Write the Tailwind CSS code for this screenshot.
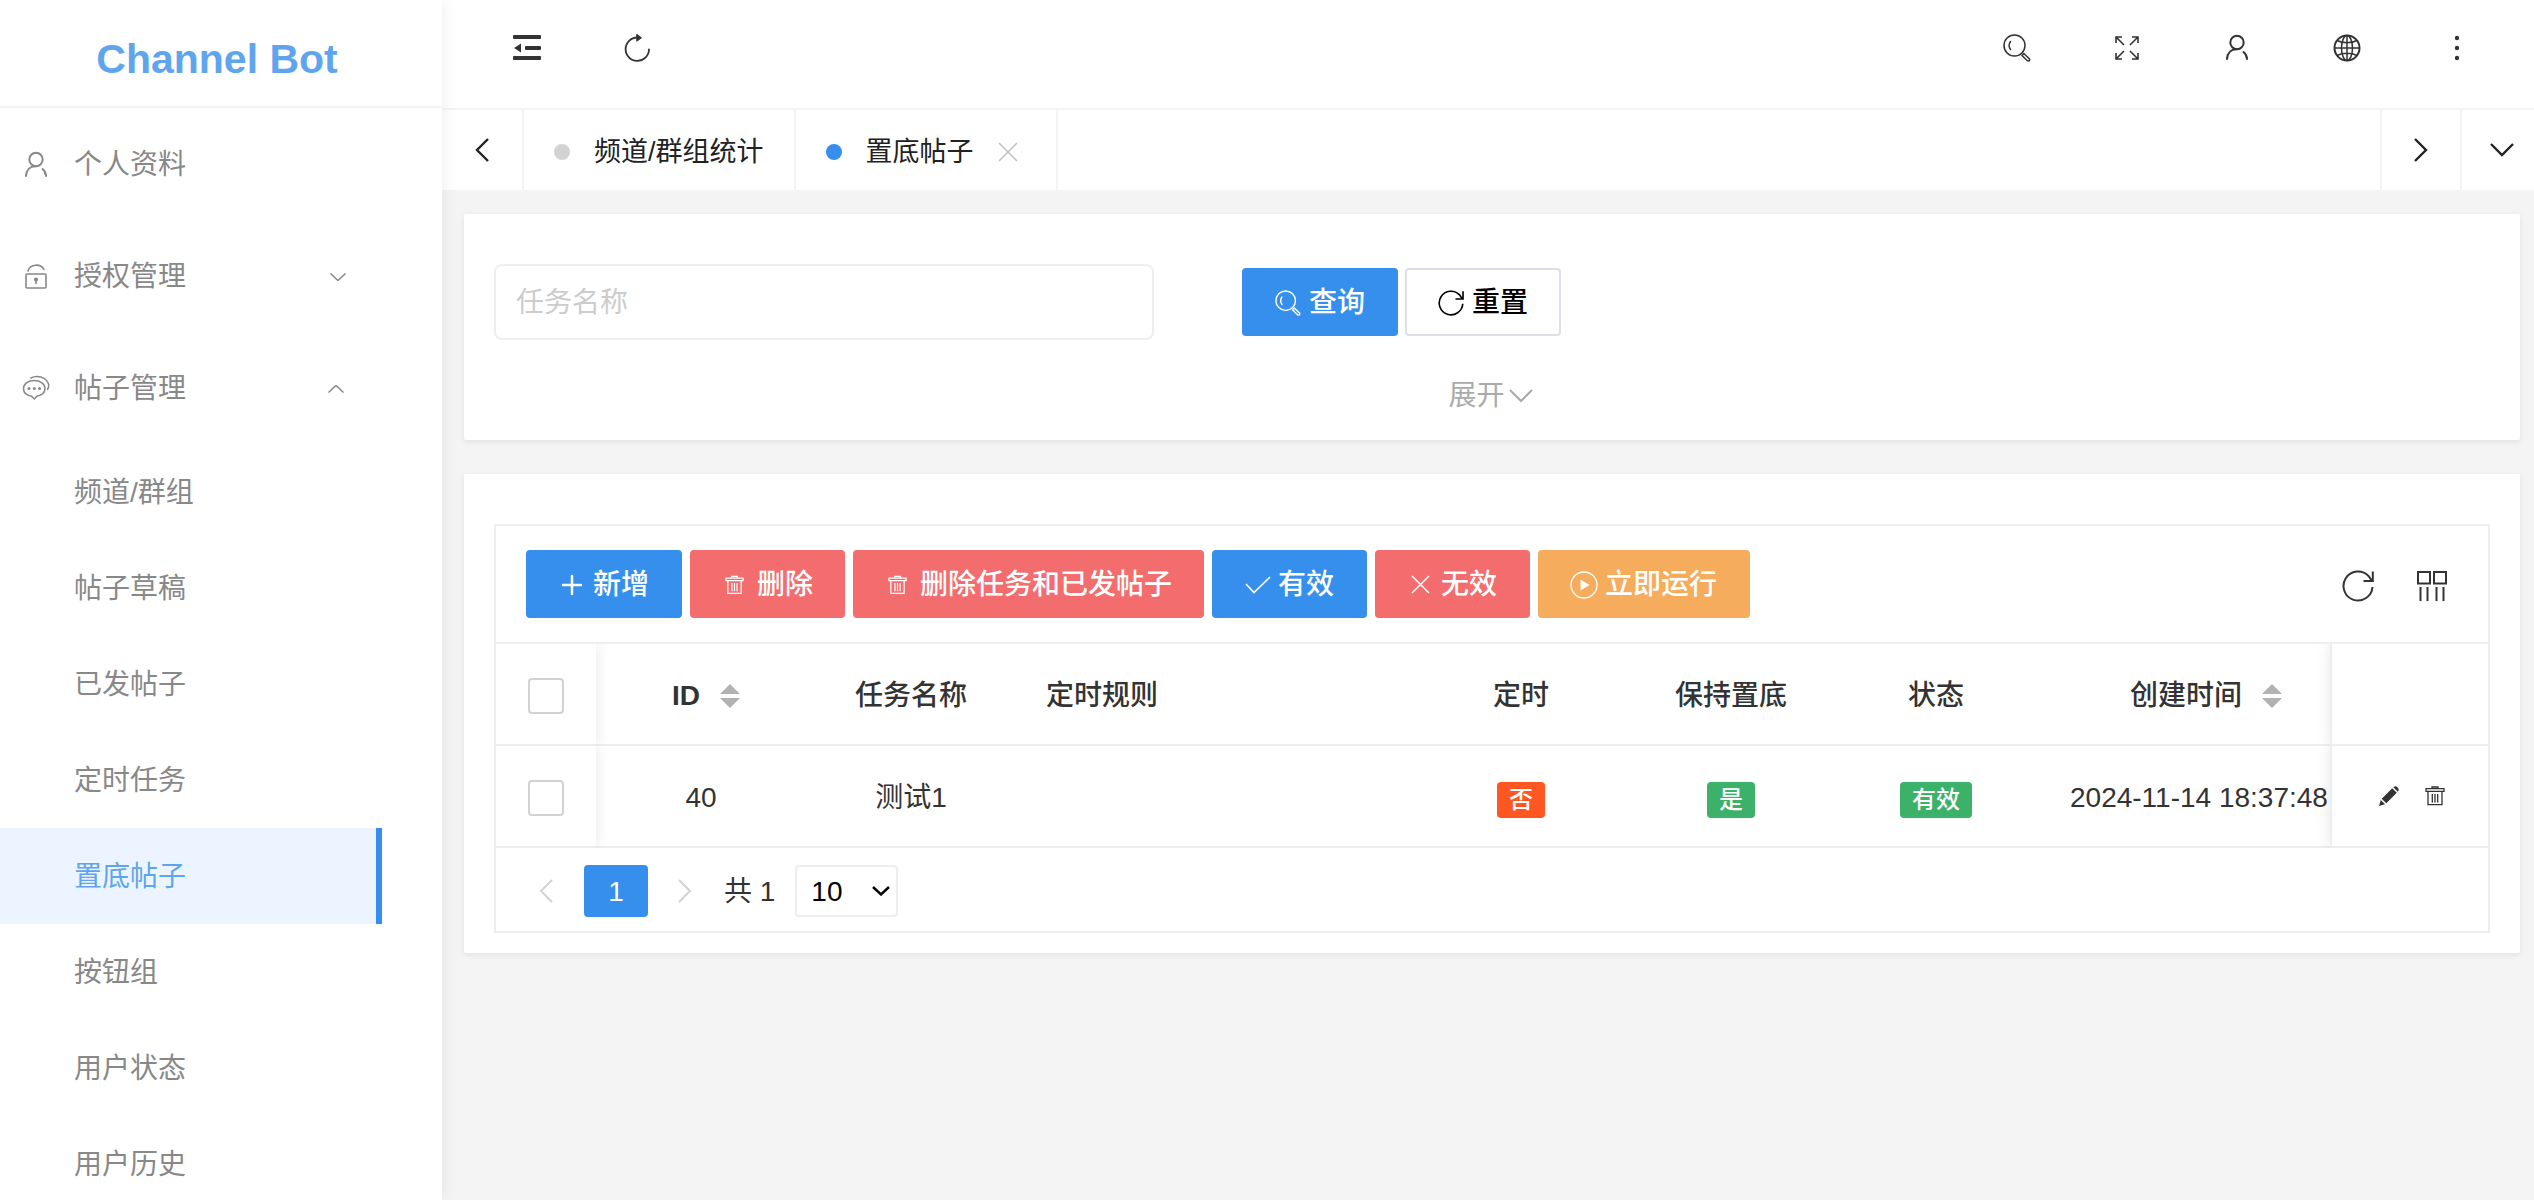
<!DOCTYPE html>
<html lang="zh-CN">
<head>
  <meta charset="UTF-8" />
  <meta name="viewport" content="width=device-width, initial-scale=1.0" />
  <title>Channel Bot</title>
  <script src="https://cdn.jsdelivr.net/npm/@tailwindcss/browser@4"></script>
</head>
<body class="flex h-screen overflow-hidden bg-[#f4f4f4] font-['Liberation_Sans','Noto_Sans_CJK_SC',sans-serif] text-[28px] leading-10 text-[#333]">

  <!-- shared icons -->
  <svg class="hidden">
    <symbol id="i-user" viewBox="0 0 28 28" fill="none" stroke="currentColor" stroke-width="2" stroke-linecap="round">
      <circle cx="14" cy="8.500" r="6.700" />
      <path d="M4 25C4.300 19 8 15.300 13.500 15.200M20.500 18C22.800 19.800 23.900 22.300 24 25" />
    </symbol>
    <symbol id="i-search" viewBox="0 0 28 28" fill="none" stroke="currentColor" stroke-width="1.500" stroke-linecap="round">
      <circle cx="11.500" cy="11.500" r="10.500" />
      <path d="M7.500 7.500C5.800 10 5.900 13.300 7.500 15.500M19 21.500L20.800 19.500L26.300 24.800C27.300 26.200 25.800 27.600 24.300 26.700Z" />
    </symbol>
    <symbol id="i-trash" viewBox="0 0 20 20" fill="none" stroke="currentColor" stroke-width="1.300">
      <path d="M7 2.500V1H13V2.500M1 2.700H19V5.300H1ZM3 5.500V18.700H17V5.500M7.300 8V16.500M10 8V16.500M12.700 8V16.500" />
    </symbol>
    <symbol id="i-reload" viewBox="0 0 32 32" fill="none" stroke="currentColor" stroke-width="2">
      <path d="M30.500 17A14.500 14.500 0 1 1 26.500 6L30 11M30.800 1.500V11H21.500" />
    </symbol>
    <symbol id="i-sort" viewBox="0 0 20 24" fill="#b2b2b2">
      <path d="M10 0L20 10H0ZM0 14H20L10 24Z" />
    </symbol>
  </svg>

  <!-- sidebar -->
  <aside class="relative z-10 w-[442px] shrink-0 overflow-hidden bg-white text-[#888] shadow-[0_0_16px_rgba(0,0,0,0.08)]">
    <h1 class="flex h-[108px] items-center justify-center border-b-2 border-[#f3f3f3] pt-3 pr-2 text-[41px] font-bold text-[#5fa5ee]">Channel Bot</h1>
    <nav>
      <a href="#" class="flex h-28 items-center gap-6 pt-0.5 pl-[22px]">
        <svg class="size-7"><use href="#i-user" /></svg>
        个人资料
      </a>
      <a href="#" class="flex h-28 items-center gap-6 pt-0.5 pl-[22px]">
        <svg class="size-7" viewBox="0 0 28 28" fill="none" stroke="currentColor" stroke-width="1.600" stroke-linecap="round">
          <rect x="4" y="11" width="20" height="14" rx="1" />
          <path d="M6 8C8 .5 19 .5 22 6.500M14 17V20.500" />
          <circle cx="14" cy="16.500" r="1.300" fill="currentColor" />
        </svg>
        授权管理
        <svg class="mr-[96px] ml-auto h-2 w-4" viewBox="0 0 16 8" fill="none" stroke="currentColor" stroke-width="1.500"><path d="M.5.5L8 7.500L15.500.5" /></svg>
      </a>
      <a href="#" class="flex h-28 items-center gap-6 pt-0.5 pl-[22px]">
        <svg class="size-7" viewBox="0 0 28 28" fill="none" stroke="currentColor" stroke-width="1.500" stroke-linecap="round">
          <path d="M12 5.500C18.500 5.500 23 9 23 13.500C23 17.500 19.500 20.300 15 21.200L12.300 24L9.500 21.200C4.500 20.300 1.500 17.500 1.500 13.500C1.500 9 6 5.500 12 5.500Z" />
          <path d="M9 3C12 1.100 18 1 22 3.300C26.500 6 28 10.500 25.500 14.500" />
          <g fill="currentColor" stroke="none"><circle cx="7" cy="13.500" r="1.500" /><circle cx="12.300" cy="13.500" r="1.500" /><circle cx="17.600" cy="13.500" r="1.500" /></g>
        </svg>
        帖子管理
        <svg class="mr-[98px] ml-auto h-2 w-4" viewBox="0 0 16 8" fill="none" stroke="currentColor" stroke-width="1.500"><path d="M.5 7.500L8 .5L15.500 7.500" /></svg>
      </a>
      <div class="w-[382px]">
        <a href="#" class="flex h-24 items-center pt-0.5 pl-[74px]">频道/群组</a>
        <a href="#" class="flex h-24 items-center pt-0.5 pl-[74px]">帖子草稿</a>
        <a href="#" class="flex h-24 items-center pt-0.5 pl-[74px]">已发帖子</a>
        <a href="#" class="flex h-24 items-center pt-0.5 pl-[74px]">定时任务</a>
        <a href="#" class="flex h-24 items-center border-r-6 border-[#368fec] bg-[#ecf5ff] pt-0.5 pl-[74px] text-[#5fa5ee]">置底帖子</a>
        <a href="#" class="flex h-24 items-center pt-0.5 pl-[74px]">按钮组</a>
        <a href="#" class="flex h-24 items-center pt-0.5 pl-[74px]">用户状态</a>
        <a href="#" class="flex h-24 items-center pt-0.5 pl-[74px]">用户历史</a>
      </div>
    </nav>
  </aside>

  <div class="min-w-0 flex-1">
    <!-- top bar -->
    <header class="flex h-[110px] border-b-2 border-[#f4f4f4] bg-white pr-[22px] pb-3 pl-[30px]">
      <button class="flex w-[110px] items-center justify-center" aria-label="收起菜单">
        <svg class="size-7" viewBox="0 0 28 28" fill="currentColor">
          <rect y="1" width="28" height="4" rx="1" /><rect x="12" y="12" width="16" height="4" rx="1" /><rect y="22" width="28" height="4" rx="1" />
          <path d="M8 9.500V18.500L1 14Z" />
        </svg>
      </button>
      <button class="flex w-[110px] items-center justify-center" aria-label="刷新">
        <svg class="size-7" viewBox="0 0 28 28" fill="none" stroke="currentColor" stroke-width="1.800" stroke-linecap="round">
          <path d="M26 15.500A11.700 11.700 0 1 1 14.300 3.500" />
          <path d="M14 .5L18.500 3.800L14 7Z" fill="currentColor" stroke-width="1" />
        </svg>
      </button>
      <button class="ml-auto flex w-[110px] items-center justify-center" aria-label="搜索">
        <svg class="size-7"><use href="#i-search" /></svg>
      </button>
      <button class="flex w-[110px] items-center justify-center" aria-label="全屏">
        <svg class="size-6" viewBox="0 0 24 24" fill="none" stroke="currentColor" stroke-width="1.600">
          <path d="M1 7V1H7M1 1L9 9M17 1H23V7M23 1L15 9M1 17V23H7M1 23L9 15M17 23H23V17M23 23L15 15" />
        </svg>
      </button>
      <button class="flex w-[110px] items-center justify-center" aria-label="用户">
        <svg class="size-7"><use href="#i-user" /></svg>
      </button>
      <button class="flex w-[110px] items-center justify-center" aria-label="语言">
        <svg class="size-7" viewBox="0 0 28 28" fill="none" stroke="currentColor" stroke-width="1.500">
          <circle cx="14" cy="14" r="12.500" stroke-width="2" />
          <ellipse cx="14" cy="14" rx="5.500" ry="12.500" />
          <path d="M14 1V27M1 14H27M4 6.500C9.500 9.500 18.500 9.500 24 6.500M4 21.500C9.500 18.500 18.500 18.500 24 21.500" />
        </svg>
      </button>
      <button class="flex w-[110px] items-center justify-center" aria-label="更多">
        <svg class="size-7" viewBox="0 0 28 28" fill="currentColor"><circle cx="14" cy="4" r="2.200" /><circle cx="14" cy="14" r="2.200" /><circle cx="14" cy="24" r="2.200" /></svg>
      </button>
    </header>

    <!-- page tabs -->
    <div class="flex h-20 bg-white text-[27px] text-[#222]">
      <button class="flex w-[82px] items-center justify-center border-r-2 border-[#f4f4f4]" aria-label="向左">
        <svg class="h-6 w-[14px]" viewBox="0 0 14 24" fill="none" stroke="currentColor" stroke-width="2.400"><path d="M13 1L2 12L13 23" /></svg>
      </button>
      <a href="#" class="flex items-center gap-6 border-r-2 border-[#f4f4f4] px-[30px] pt-[3px]">
        <span class="size-4 rounded-full bg-[#d2d2d2]"></span>频道/群组统计
      </a>
      <div class="flex items-center gap-6 border-r-2 border-[#f4f4f4] pt-[3px] pr-[38px] pl-[30px]">
        <span class="size-4 rounded-full bg-[#368fec]"></span>
        <a href="#">置底帖子</a>
        <button class="text-[#c2c2c2]" aria-label="关闭">
          <svg class="size-5" viewBox="0 0 20 20" fill="none" stroke="currentColor" stroke-width="1.600"><path d="M1 1L19 19M19 1L1 19" /></svg>
        </button>
      </div>
      <button class="ml-auto flex w-[82px] items-center justify-center border-x-2 border-[#f4f4f4]" aria-label="向右">
        <svg class="h-6 w-[14px]" viewBox="0 0 14 24" fill="none" stroke="currentColor" stroke-width="2.400"><path d="M1 1L12 12L1 23" /></svg>
      </button>
      <button class="flex w-[72px] items-center pl-7" aria-label="标签操作">
        <svg class="h-[14px] w-6" viewBox="0 0 24 14" fill="none" stroke="currentColor" stroke-width="2.400"><path d="M1 1L12 12L23 1" /></svg>
      </button>
    </div>

    <main class="flex flex-col gap-[34px] pt-6 pr-[14px] pl-[22px]">
      <!-- search form -->
      <section class="rounded-xs bg-white px-[30px] pt-[50px] pb-6 shadow-[0_2px_5px_1px_rgba(0,0,0,0.06)]">
        <form class="flex items-center">
          <input type="text" aria-label="任务名称" placeholder="任务名称" class="h-[76px] w-[660px] rounded-lg border-2 border-[#eee] px-5 pt-0.5 placeholder:text-[#ccc]" />
          <button type="button" class="ml-[88px] flex h-[68px] items-center gap-2 rounded bg-[#368fec] px-[33px] pt-0.5 font-medium text-white">
            <svg class="size-[26px]"><use href="#i-search" /></svg>查询
          </button>
          <button type="reset" class="ml-[7px] flex h-[68px] items-center gap-2 rounded border-2 border-[#dcdfe6] px-[31px] pt-0.5 font-medium text-black">
            <svg class="size-[26px]"><use href="#i-reload" /></svg>重置
          </button>
        </form>
        <div class="mt-9 flex justify-center pr-[3px]">
          <a href="#" class="flex items-center gap-1 text-[#aaa]">
            展开
            <svg class="h-[14px] w-6" viewBox="0 0 24 14" fill="none" stroke="currentColor" stroke-width="2"><path d="M1 1L12 12L23 1" /></svg>
          </a>
        </div>
      </section>

      <!-- task list -->
      <section class="rounded-xs bg-white px-[30px] pt-[50px] pb-5 shadow-[0_2px_5px_1px_rgba(0,0,0,0.06)]">
        <div class="border-2 border-[#eee]">
          <div class="flex items-center gap-2 border-b-2 border-[#eee] px-[30px] py-6 font-medium text-white">
            <button class="flex h-[68px] items-center gap-[7px] rounded bg-[#368fec] pt-0.5 pr-[33px] pl-[34px]">
              <svg class="size-[26px]" viewBox="0 0 26 26" stroke="currentColor" stroke-width="2.500" stroke-linecap="round"><path d="M12 4V22M3 13H21" /></svg>新增
            </button>
            <button class="flex h-[68px] items-center gap-[7px] rounded bg-[#f36d6f] pt-0.5 pr-[32px] pl-[34px]">
              <svg class="size-[26px] py-[3px] pr-[6px] pl-px"><use href="#i-trash" /></svg>删除
            </button>
            <button class="flex h-[68px] items-center gap-[7px] rounded bg-[#f36d6f] pt-0.5 pr-[32px] pl-[34px]">
              <svg class="size-[26px] py-[3px] pr-[6px] pl-px"><use href="#i-trash" /></svg>删除任务和已发帖子
            </button>
            <button class="flex h-[68px] items-center gap-[7px] rounded bg-[#368fec] pt-0.5 pr-[33px] pl-[33px]">
              <svg class="size-[26px]" viewBox="0 0 26 26" fill="none" stroke="currentColor" stroke-width="1.700"><path d="M1 12L9 20.500L25 5" /></svg>有效
            </button>
            <button class="flex h-[68px] items-center gap-[7px] rounded bg-[#f36d6f] pt-0.5 pr-[33px] pl-[33px]">
              <svg class="size-[26px]" viewBox="0 0 26 26" stroke="currentColor" stroke-width="1.500"><path d="M4 4L21 21M21 4L4 21" /></svg>无效
            </button>
            <button class="flex h-[68px] items-center gap-[7px] rounded bg-[#f5ac5c] pt-0.5 pr-[33px] pl-[32px]">
              <svg class="size-7" viewBox="0 0 28 28" fill="none" stroke="currentColor" stroke-width="1.300"><circle cx="14" cy="14" r="13" /><path d="M10.500 8.500V19.500L19.500 14Z" fill="currentColor" stroke="none" /></svg>立即运行
            </button>
            <div class="ml-auto flex gap-[42px] pt-1 pr-[10px] text-[#333]">
              <button aria-label="刷新表格"><svg class="size-8"><use href="#i-reload" /></svg></button>
              <button aria-label="筛选列">
                <svg class="size-8" viewBox="0 0 32 32" fill="none" stroke="currentColor" stroke-width="2"><path d="M2 2H14V13.500H2ZM18 2H30V13.500H18ZM4.500 17V31M11.500 17V31M20.500 17V31M27.500 17V31" /></svg>
              </button>
            </div>
          </div>

          <table class="w-full table-fixed border-separate border-spacing-0 overflow-hidden text-center whitespace-nowrap">
            <colgroup>
              <col class="w-[100px]" /><col class="w-[210px]" /><col class="w-[210px]" /><col />
              <col class="w-[210px]" /><col class="w-[210px]" /><col class="w-[200px]" /><col class="w-[294px]" /><col class="w-[158px]" />
            </colgroup>
            <thead>
              <tr class="h-[102px]">
                <th class="relative z-10 border-b-2 border-[#eee] bg-white pt-1 leading-none shadow-[0_0_14px_rgba(0,0,0,0.1)] [clip-path:inset(0_-14px_0_0)]">
                  <input type="checkbox" aria-label="全选" class="size-9 appearance-none rounded border-2 border-[#d2d2d2] align-middle" />
                </th>
                <th class="border-b-2 border-[#eee] pt-1 pl-[10px] font-bold">
                  <span class="flex items-center justify-center gap-5">ID<svg class="h-6 w-5"><use href="#i-sort" /></svg></span>
                </th>
                <th class="border-b-2 border-[#eee] pt-1 font-medium">任务名称</th>
                <th class="border-b-2 border-[#eee] pt-1 pl-[30px] text-left font-medium">定时规则</th>
                <th class="border-b-2 border-[#eee] pt-1 font-medium">定时</th>
                <th class="border-b-2 border-[#eee] pt-1 font-medium">保持置底</th>
                <th class="border-b-2 border-[#eee] pt-1 font-medium">状态</th>
                <th class="border-b-2 border-[#eee] pt-1 pl-[94px] font-medium">
                  <span class="flex items-center gap-5">创建时间<svg class="h-6 w-5"><use href="#i-sort" /></svg></span>
                </th>
                <th class="relative z-10 border-b-2 border-l-2 border-[#eee] bg-white shadow-[0_0_14px_rgba(0,0,0,0.1)] [clip-path:inset(0_0_0_-14px)]"></th>
              </tr>
            </thead>
            <tbody>
              <tr class="h-[102px]">
                <td class="relative z-10 border-b-2 border-[#eee] bg-white pt-1 leading-none shadow-[0_0_14px_rgba(0,0,0,0.1)] [clip-path:inset(0_-14px_0_0)]">
                  <input type="checkbox" aria-label="选择任务 40" class="size-9 appearance-none rounded border-2 border-[#d2d2d2] align-middle" />
                </td>
                <td class="border-b-2 border-[#eee] pt-1">40</td>
                <td class="border-b-2 border-[#eee] pt-1">测试1</td>
                <td class="border-b-2 border-[#eee] pt-1"></td>
                <td class="border-b-2 border-[#eee] pt-1"><span class="inline-block h-9 rounded bg-[#ff5722] px-3 align-middle text-2xl leading-9 font-medium text-white">否</span></td>
                <td class="border-b-2 border-[#eee] pt-1"><span class="inline-block h-9 rounded bg-[#3cb16a] px-3 align-middle text-2xl leading-9 font-medium text-white">是</span></td>
                <td class="border-b-2 border-[#eee] pt-1"><span class="inline-block h-9 rounded bg-[#3cb16a] px-3 align-middle text-2xl leading-9 font-medium text-white">有效</span></td>
                <td class="border-b-2 border-[#eee] pt-1 pl-[34px] text-left">2024-11-14 18:37:48</td>
                <td class="relative z-10 border-b-2 border-l-2 border-[#eee] bg-white pl-1 shadow-[0_0_14px_rgba(0,0,0,0.1)] [clip-path:inset(0_0_0_-14px)]">
                  <div class="flex justify-center gap-[26px]">
                    <button aria-label="编辑">
                      <svg class="size-5" viewBox="0 0 20 20" fill="currentColor"><path d="M0 20L1.800 14L6 18.200ZM2.700 12.700L13.200 2.200L17.800 6.800L7.300 17.300ZM14.300 1.200Q16.500-.6 18.600 1.400Q20.600 3.500 18.800 5.700Z" /></svg>
                    </button>
                    <button aria-label="删除任务"><svg class="size-5"><use href="#i-trash" /></svg></button>
                  </div>
                </td>
              </tr>
            </tbody>
          </table>

          <!-- pager -->
          <div class="flex items-center pt-[17px] pb-[14px] pl-[43px]">
            <button class="text-[#d2d2d2]" aria-label="上一页">
              <svg class="h-6 w-[14px]" viewBox="0 0 14 24" fill="none" stroke="currentColor" stroke-width="2"><path d="M13 1L2 12L13 23" /></svg>
            </button>
            <button class="ml-[31px] h-[52px] w-16 rounded bg-[#368fec] pt-0.5 text-white">1</button>
            <button class="ml-[30px] text-[#d2d2d2]" aria-label="下一页">
              <svg class="h-6 w-[14px]" viewBox="0 0 14 24" fill="none" stroke="currentColor" stroke-width="2"><path d="M1 1L12 12L1 23" /></svg>
            </button>
            <span class="ml-8 pt-0.5">共 1</span>
            <div class="relative ml-5">
              <select aria-label="每页条数" class="block h-[52px] w-[103px] appearance-none rounded border-2 border-[#eee] bg-white pt-0.5 pl-[14px] text-black">
                <option>10</option>
                <option>20</option>
                <option>50</option>
              </select>
              <svg class="pointer-events-none absolute top-[21px] right-2 h-[10px] w-[18px] text-black" viewBox="0 0 18 10" fill="none" stroke="currentColor" stroke-width="2.400"><path d="M1 1L9 8.500L17 1" /></svg>
            </div>
          </div>
        </div>
      </section>
    </main>
  </div>
</body>
</html>
